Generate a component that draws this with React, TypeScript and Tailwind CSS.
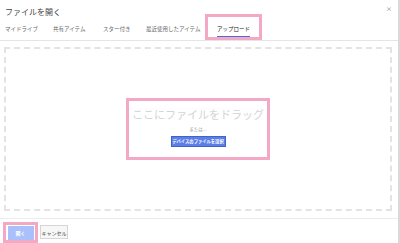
const font = { fontFamily: '"Noto Sans CJK JP", "Noto Sans", sans-serif' };

const tabs = [
  { label: "マイドライブ", w: "w-[48px]" },
  { label: "共有アイテム", w: "w-[50px]" },
  { label: "スター付き", w: "w-[43px]" },
  { label: "最近使用したアイテム", w: "w-[64px]" },
];

export default function App() {
  return (
    <div
      className="w-[400px] h-[243px] bg-white flex flex-col border-r-2 border-[#d9d9d9] overflow-hidden"
      style={font}
    >
      <div className="h-[21px] flex items-center justify-between pl-[5px] pr-[6px]">
        <span className="text-[8px] leading-none text-[#444] pt-[3px]">ファイルを開く</span>
        <span className="text-[6px] leading-none text-[#777] -mt-[4px]">×</span>
      </div>

      <div className="h-[20px] flex border-b border-[#e5e5e5]">
        {tabs.map((t) => (
          <div key={t.label} className={`${t.w} flex items-center pl-[5px] pb-[2px]`}>
            <span className="text-[5.5px] leading-none text-[#666] whitespace-nowrap">{t.label}</span>
          </div>
        ))}
        <div className="relative w-[57px] flex items-center pl-[12px] pb-[2px]">
          <span className="text-[5.5px] leading-none text-[#222] whitespace-nowrap">アップロード</span>
          <div className="absolute left-[12px] w-[33px] bottom-[3px] h-[1px] bg-[#4a6fd8]" />
          <div className="absolute left-0 right-0 -top-[7px] bottom-0 border-[3px] border-[#f3a8c6]" />
        </div>
      </div>

      <div className="pt-[6px] pl-[4px] pr-[6px]">
        <div className="h-[164px] border-2 border-dashed border-[#e3e3e3] flex items-center justify-center">
          <div className="w-[144px] h-[62px] border-[3px] border-[#f3a8c6] flex flex-col items-center">
            <span className="mt-[8px] text-[11px] leading-none text-[#d4d4d4] whitespace-nowrap">
              ここにファイルをドラッグ
            </span>
            <span className="mt-[7px] text-[4.5px] leading-none text-[#999]">または...</span>
            <div className="mt-[4px] w-[55px] h-[11px] bg-[#5b7fe6] border border-[#3f63cc] flex items-center justify-center">
              <span className="text-[4.3px] leading-none text-white font-bold whitespace-nowrap">
                デバイスのファイルを選択
              </span>
            </div>
          </div>
        </div>
      </div>

      <div className="mt-[7px] border-t border-[#ececec] flex items-start pt-[3px] pl-[3px] gap-[2px]">
        <div className="w-[35px] h-[21px] border-[3px] border-[#f3a8c6] flex items-center justify-center">
          <div className="w-[26px] h-[14px] bg-[#a9c0fb] flex items-center justify-center">
            <span className="text-[5px] leading-none text-white font-bold">開く</span>
          </div>
        </div>
        <div className="mt-[3px] w-[28px] h-[14px] border border-[#d6d6d6] bg-[#f7f7f7] flex items-center justify-center">
          <span className="text-[5px] leading-none text-[#444] whitespace-nowrap">キャンセル</span>
        </div>
      </div>
    </div>
  );
}
